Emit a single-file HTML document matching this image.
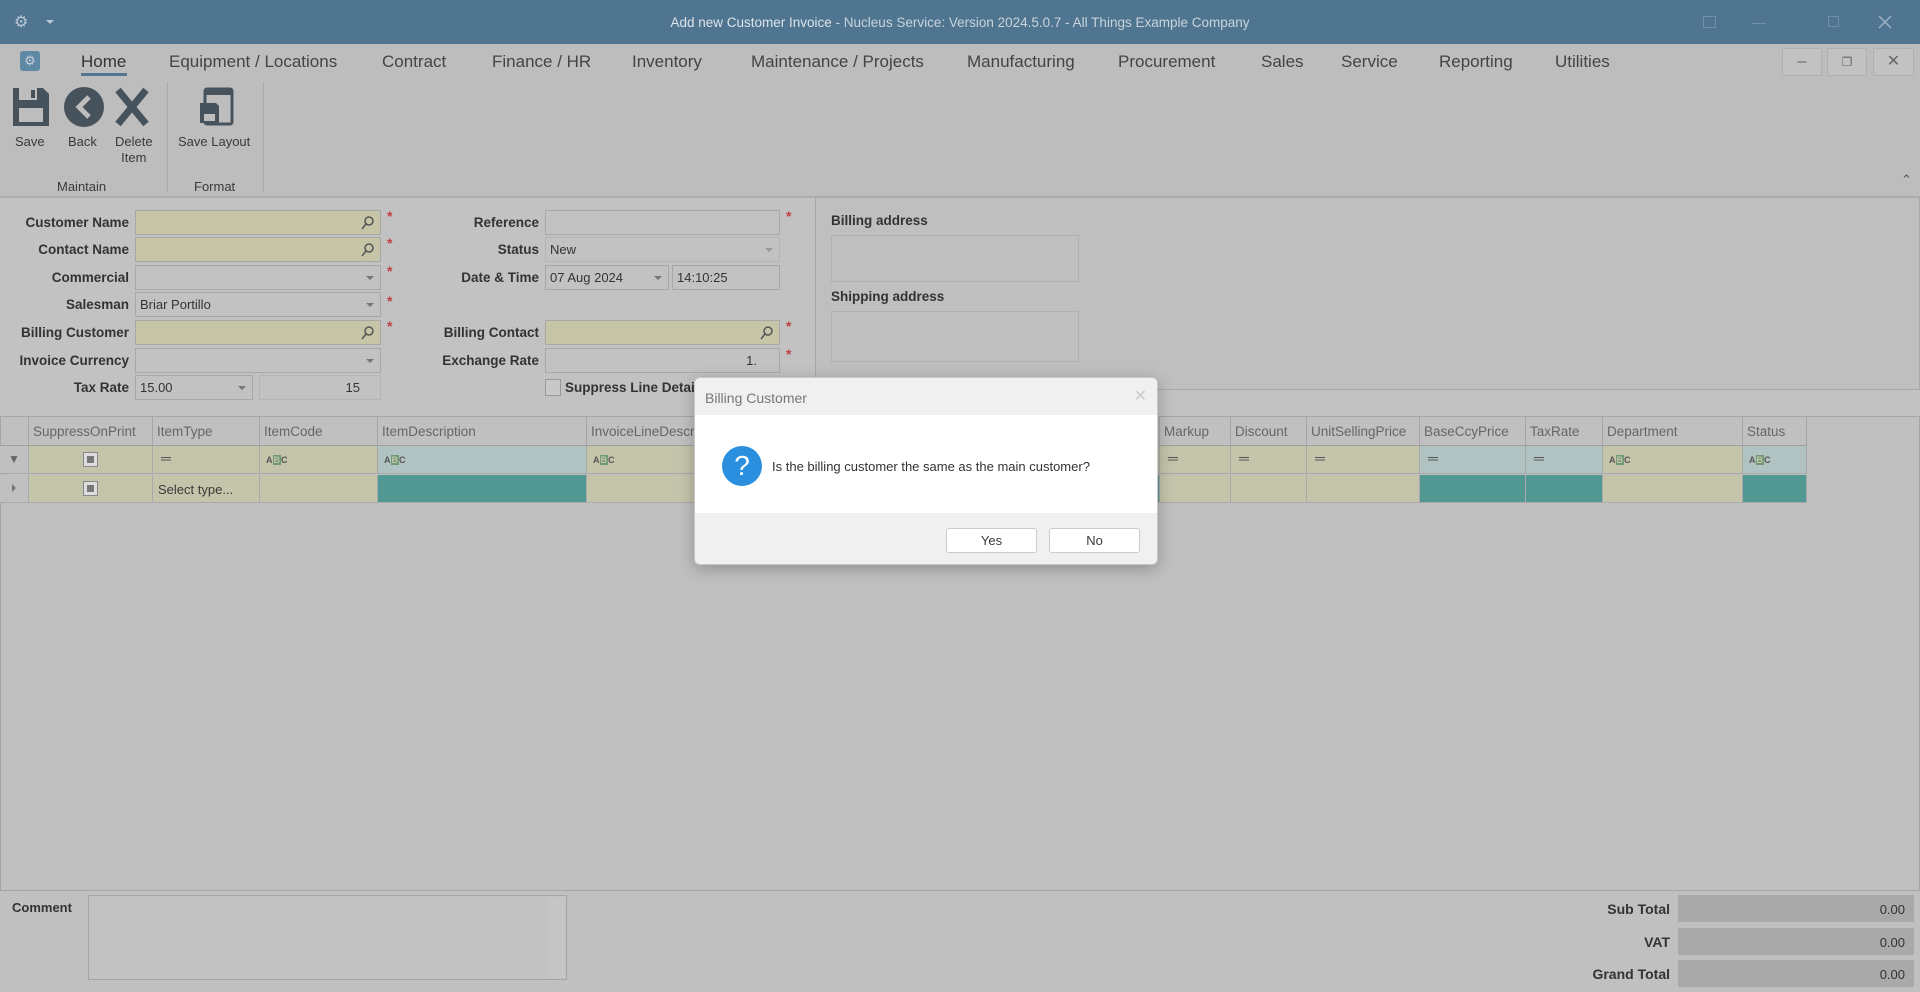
<!DOCTYPE html>
<html><head><meta charset="utf-8">
<style>
*{box-sizing:border-box;margin:0;padding:0}
body{width:1920px;height:992px;overflow:hidden;background:#c0c0c0;font-family:"Liberation Sans",sans-serif;color:#3a3a3a;position:relative}
.a{position:absolute}
.tab{position:absolute;top:52px;font-size:17px;color:#444}
.lbl{position:absolute;font-size:13.5px;font-weight:bold;text-align:right;color:#333}
.inp{position:absolute;height:25px;border:1px solid #a8a8a8;background:#c2c2c2;font-size:13px;padding:4px 4px;color:#333}
.y{background:#c6c5a8}
.ast{position:absolute;color:#c04040;font-size:14px;font-weight:bold}
.dd{position:absolute;right:6px;top:10px;width:0;height:0;border-left:4px solid transparent;border-right:4px solid transparent;border-top:4px solid #777}
.mag{position:absolute;right:5px;top:4px}
.hc{position:absolute;top:417px;height:29px;border-right:1px solid #a5a5a5;font-size:13.5px;color:#666;padding:7px 4px;white-space:nowrap;overflow:hidden}
.cell{position:absolute;height:28px;border-right:1px solid #a9a9a9;border-bottom:1px solid #a9a9a9}
.cy{background:#c4c4ab}.cb{background:#b1c2c2}.ct{background:#519893}
.abc{position:absolute;left:6px;top:9px;font-size:9px;font-weight:bold;color:#555}
.abc b{background:#6f9a74;color:#c4c4ab;padding:0 1px}
.eq{position:absolute;left:8px;top:4px;font-size:14px;color:#555}
.chk{position:absolute;width:15px;height:15px;border:1px solid #888;background:#ddd;top:6px}
.chk:after{content:"";position:absolute;left:3px;top:3px;width:7px;height:7px;background:#777}
</style></head><body>
<svg width="0" height="0" style="position:absolute"><defs><symbol id="m" viewBox="0 0 14 16"><circle cx="8" cy="6" r="4" fill="none" stroke="#555" stroke-width="1.5"/><path d="M5 9l-4 5" stroke="#555" stroke-width="1.5"/></symbol></defs></svg>
<!-- title bar -->
<div class="a" style="left:0;top:0;width:1920px;height:44px;background:#4f7590"></div>
<div class="a" style="left:14px;top:12px;color:#b8c8d4;font-size:16px">⚙</div>
<div class="a" style="left:46px;top:20px;border-left:4px solid transparent;border-right:4px solid transparent;border-top:4px solid #b8c8d4"></div>
<div class="a" style="left:0;width:1920px;top:15px;text-align:center;font-size:13.5px;color:#c9d4dc"><span style="color:#dde4ea">Add new Customer Invoice</span> - Nucleus Service: Version 2024.5.0.7 - All Things Example Company</div>
<div class="a" style="left:1703px;top:16px;width:13px;height:12px;border:1px solid #6f90a8"></div>
<div class="a" style="left:1752px;top:23px;width:14px;height:1px;background:#6f90a8"></div>
<div class="a" style="left:1828px;top:16px;width:11px;height:11px;border:1px solid #6f90a8"></div>
<svg class="a" style="left:1878px;top:15px" width="14" height="14"><path d="M1 1l12 12M13 1L1 13" stroke="#9fb5c6" stroke-width="1.5"/></svg>
<!-- tabs -->
<div class="a" style="left:0;top:44px;width:1920px;height:153px;background:#bdbdbd"></div>
<div class="a" style="left:20px;top:51px;width:20px;height:20px;background:#5e8aa6;border-radius:3px;color:#ccd;font-size:13px;text-align:center;line-height:20px">⚙</div>
<div class="tab" style="left:81px;color:#333">Home</div>
<div class="a" style="left:81px;top:73px;width:46px;height:3px;background:#4f7590"></div>
<div class="tab" style="left:169px">Equipment / Locations</div>
<div class="tab" style="left:382px">Contract</div>
<div class="tab" style="left:492px">Finance / HR</div>
<div class="tab" style="left:632px">Inventory</div>
<div class="tab" style="left:751px">Maintenance / Projects</div>
<div class="tab" style="left:967px">Manufacturing</div>
<div class="tab" style="left:1118px">Procurement</div>
<div class="tab" style="left:1261px">Sales</div>
<div class="tab" style="left:1341px">Service</div>
<div class="tab" style="left:1439px">Reporting</div>
<div class="tab" style="left:1555px">Utilities</div>
<div class="a" style="left:1782px;top:48px;width:40px;height:28px;border:1px solid #b0b0b0;background:#c2c2c2;text-align:center;line-height:26px;color:#666">–</div>
<div class="a" style="left:1827px;top:48px;width:40px;height:28px;border:1px solid #b0b0b0;background:#c2c2c2;text-align:center;line-height:26px;color:#666;font-size:12px">❐</div>
<div class="a" style="left:1873px;top:48px;width:41px;height:28px;border:1px solid #b0b0b0;background:#c2c2c2;text-align:center;line-height:26px;color:#666">✕</div>
<!-- ribbon -->
<svg class="a" style="left:10px;top:86px" width="145" height="42">
 <g fill="#46525c">
  <path d="M3 2h30l6 6v32H3z"/><rect x="9" y="2" width="18" height="12" fill="#bdbdbd"/><rect x="21" y="4" width="4" height="8"/><rect x="9" y="22" width="24" height="14" fill="#bdbdbd"/>
  <ellipse cx="74" cy="21" rx="20" ry="20"/><path d="M79 11l-10 10 10 10" stroke="#bdbdbd" stroke-width="5" fill="none"/>
  <path d="M108 4l28 34M136 4l-28 34" stroke="#46525c" stroke-width="7"/>
 </g></svg>
<svg class="a" style="left:198px;top:87px" width="40" height="40"><g fill="none" stroke="#46525c" stroke-width="3"><rect x="7" y="2" width="27" height="35" rx="2"/></g><rect x="7" y="2" width="27" height="6" fill="#46525c"/><path d="M2 16h16l3 3v17H2z" fill="#46525c"/><rect x="6" y="27" width="11" height="7" fill="#bdbdbd"/></svg>
<div class="a" style="left:15px;top:134px;font-size:13px">Save</div>
<div class="a" style="left:68px;top:134px;font-size:13px">Back</div>
<div class="a" style="left:115px;top:134px;font-size:13px;text-align:center;line-height:16px">Delete<br>Item</div>
<div class="a" style="left:178px;top:134px;font-size:13px">Save Layout</div>
<div class="a" style="left:57px;top:179px;font-size:13px">Maintain</div>
<div class="a" style="left:194px;top:179px;font-size:13px">Format</div>
<div class="a" style="left:167px;top:82px;width:1px;height:110px;background:#aaa"></div>
<div class="a" style="left:263px;top:82px;width:1px;height:110px;background:#aaa"></div>
<div class="a" style="left:1901px;top:172px;font-size:13px;color:#555">⌃</div>
<div class="a" style="left:0;top:196px;width:1920px;height:2px;background:#adadad"></div>
<!-- form left -->
<div class="a" style="left:0;top:198px;width:1920px;height:219px;background:#c2c2c2"></div>
<div class="lbl" style="left:0;width:129px;top:215px">Customer Name</div>
<div class="inp y" style="left:135px;top:210px;width:246px"><svg class="mag" width="14" height="16"><use href="#m"/></svg></div><div class="ast" style="left:387px;top:208px">*</div>
<div class="lbl" style="left:0;width:129px;top:242px">Contact Name</div>
<div class="inp y" style="left:135px;top:237px;width:246px"><svg class="mag" width="14" height="16"><use href="#m"/></svg></div><div class="ast" style="left:387px;top:235px">*</div>
<div class="lbl" style="left:0;width:129px;top:270px">Commercial</div>
<div class="inp" style="left:135px;top:265px;width:246px"><span class="dd"></span></div><div class="ast" style="left:387px;top:263px">*</div>
<div class="lbl" style="left:0;width:129px;top:297px">Salesman</div>
<div class="inp" style="left:135px;top:292px;width:246px">Briar Portillo<span class="dd"></span></div><div class="ast" style="left:387px;top:293px">*</div>
<div class="lbl" style="left:0;width:129px;top:325px">Billing Customer</div>
<div class="inp y" style="left:135px;top:320px;width:246px"><svg class="mag" width="14" height="16"><use href="#m"/></svg></div><div class="ast" style="left:387px;top:318px">*</div>
<div class="lbl" style="left:0;width:129px;top:353px">Invoice Currency</div>
<div class="inp" style="left:135px;top:348px;width:246px"><span class="dd"></span></div>
<div class="lbl" style="left:0;width:129px;top:380px">Tax Rate</div>
<div class="inp" style="left:135px;top:375px;width:118px">15.00<span class="dd"></span></div>
<div class="inp" style="left:259px;top:375px;width:122px;text-align:right;padding-right:20px;border-color:#b5b5b5">15</div>
<!-- form mid -->
<div class="lbl" style="left:400px;width:139px;top:215px">Reference</div>
<div class="inp" style="left:545px;top:210px;width:235px"></div><div class="ast" style="left:786px;top:208px">*</div>
<div class="lbl" style="left:400px;width:139px;top:242px">Status</div>
<div class="inp" style="left:545px;top:237px;width:235px;border-color:#b5b5b5">New<span class="dd" style="border-top-color:#999"></span></div>
<div class="lbl" style="left:400px;width:139px;top:270px">Date &amp; Time</div>
<div class="inp" style="left:545px;top:265px;width:124px">07 Aug 2024<span class="dd"></span></div>
<div class="inp" style="left:672px;top:265px;width:108px">14:10:25</div>
<div class="lbl" style="left:400px;width:139px;top:325px">Billing Contact</div>
<div class="inp y" style="left:545px;top:320px;width:235px"><svg class="mag" width="14" height="16"><use href="#m"/></svg></div><div class="ast" style="left:786px;top:318px">*</div>
<div class="lbl" style="left:400px;width:139px;top:353px">Exchange Rate</div>
<div class="inp" style="left:545px;top:348px;width:235px;text-align:right;padding-right:22px">1.</div><div class="ast" style="left:786px;top:346px">*</div>
<div class="a" style="left:545px;top:379px;width:16px;height:17px;border:1px solid #999;background:#c8c8c8"></div>
<div class="lbl" style="left:565px;top:380px;text-align:left">Suppress Line Details</div>
<!-- right panel -->
<div class="a" style="left:815px;top:197px;width:1105px;height:193px;border:1px solid #a8a8a8;background:#bfbfbf"></div>
<div class="lbl" style="left:831px;top:213px;text-align:left">Billing address</div>
<div class="a" style="left:831px;top:235px;width:248px;height:47px;border:1px solid #b0b0b0"></div>
<div class="lbl" style="left:831px;top:289px;text-align:left">Shipping address</div>
<div class="a" style="left:831px;top:311px;width:248px;height:51px;border:1px solid #b0b0b0"></div>
<!-- grid -->
<div class="a" style="left:0;top:416px;width:1920px;height:475px;border:1px solid #a5a5a5;background:#c0c0c0"></div>
<div class="a" style="left:0;top:445px;width:1807px;height:1px;background:#9f9f9f"></div>
<div class="hc" style="left:0;width:29px"></div>
<div class="hc" style="left:29px;width:124px">SuppressOnPrint</div>
<div class="hc" style="left:153px;width:107px">ItemType</div>
<div class="hc" style="left:260px;width:118px">ItemCode</div>
<div class="hc" style="left:378px;width:209px">ItemDescription</div>
<div class="hc" style="left:587px;width:573px">InvoiceLineDescription</div>
<div class="hc" style="left:1160px;width:71px">Markup</div>
<div class="hc" style="left:1231px;width:76px">Discount</div>
<div class="hc" style="left:1307px;width:113px">UnitSellingPrice</div>
<div class="hc" style="left:1420px;width:106px">BaseCcyPrice</div>
<div class="hc" style="left:1526px;width:77px">TaxRate</div>
<div class="hc" style="left:1603px;width:140px">Department</div>
<div class="hc" style="left:1743px;width:64px">Status</div>
<!-- filter row -->
<div class="cell" style="left:0;top:446px;width:29px;background:#c0c0c0"><span class="a" style="left:8px;top:6px;font-size:12px;color:#666">▼</span></div>
<div class="cell cy" style="left:29px;top:446px;width:124px"><span class="chk" style="left:54px"></span></div>
<div class="cell cy" style="left:153px;top:446px;width:107px"><span class="eq">═</span></div>
<div class="cell cy" style="left:260px;top:446px;width:118px"><span class="abc">A<b>B</b>C</span></div>
<div class="cell cb" style="left:378px;top:446px;width:209px"><span class="abc">A<b>B</b>C</span></div>
<div class="cell cy" style="left:587px;top:446px;width:573px"><span class="abc">A<b>B</b>C</span></div>
<div class="cell cy" style="left:1160px;top:446px;width:71px"><span class="eq">═</span></div>
<div class="cell cy" style="left:1231px;top:446px;width:76px"><span class="eq">═</span></div>
<div class="cell cy" style="left:1307px;top:446px;width:113px"><span class="eq">═</span></div>
<div class="cell cb" style="left:1420px;top:446px;width:106px"><span class="eq">═</span></div>
<div class="cell cb" style="left:1526px;top:446px;width:77px"><span class="eq">═</span></div>
<div class="cell cy" style="left:1603px;top:446px;width:140px"><span class="abc">A<b>B</b>C</span></div>
<div class="cell cb" style="left:1743px;top:446px;width:64px"><span class="abc">A<b>B</b>C</span></div>
<!-- data row -->
<div class="cell" style="left:0;top:475px;width:29px;background:#c0c0c0"><span class="a" style="left:12px;top:9px;border-top:4px solid transparent;border-bottom:4px solid transparent;border-left:4px solid #777"></span></div>
<div class="cell cy" style="left:29px;top:475px;width:124px"><span class="chk" style="left:54px"></span></div>
<div class="cell cy" style="left:153px;top:475px;width:107px;font-size:13px;padding:7px 5px">Select type...</div>
<div class="cell cy" style="left:260px;top:475px;width:118px"></div>
<div class="cell ct" style="left:378px;top:475px;width:209px"></div>
<div class="cell cy" style="left:587px;top:475px;width:573px"></div>
<div class="cell ct" style="left:1150px;top:475px;width:10px"></div>
<div class="cell cy" style="left:1160px;top:475px;width:71px"></div>
<div class="cell cy" style="left:1231px;top:475px;width:76px"></div>
<div class="cell cy" style="left:1307px;top:475px;width:113px"></div>
<div class="cell ct" style="left:1420px;top:475px;width:106px"></div>
<div class="cell ct" style="left:1526px;top:475px;width:77px"></div>
<div class="cell cy" style="left:1603px;top:475px;width:140px"></div>
<div class="cell ct" style="left:1743px;top:475px;width:64px"></div>
<!-- bottom -->
<div class="lbl" style="left:12px;top:900px;text-align:left;font-size:13px">Comment</div>
<div class="a" style="left:88px;top:895px;width:479px;height:85px;border:1px solid #a5a5a5;background:#c2c2c2"></div>
<div class="a" style="left:548px;top:897px;width:17px;height:81px;background:#c6c6c6"></div>
<div class="lbl" style="left:1500px;width:170px;top:901px;font-size:14px">Sub Total</div>
<div class="lbl" style="left:1500px;width:170px;top:934px;font-size:14px">VAT</div>
<div class="lbl" style="left:1500px;width:170px;top:966px;font-size:14px">Grand Total</div>
<div class="inp" style="left:1678px;top:895px;width:236px;height:27px;background:#a9a9a9;text-align:right;padding:6px 8px">0.00</div>
<div class="inp" style="left:1678px;top:928px;width:236px;height:27px;background:#a9a9a9;text-align:right;padding:6px 8px">0.00</div>
<div class="inp" style="left:1678px;top:960px;width:236px;height:27px;background:#a9a9a9;text-align:right;padding:6px 8px">0.00</div>
<!-- dialog -->
<div class="a" style="left:694px;top:377px;width:464px;height:188px;border-radius:6px;overflow:hidden;box-shadow:0 4px 16px rgba(0,0,0,.25);background:#f0f0f0;border:1px solid #c8c8c8">
 <div class="a" style="left:10px;top:12px;font-size:14px;color:#777">Billing Customer</div>
 <div class="a" style="right:10px;top:8px;font-size:16px;color:#ccc">✕</div>
 <div class="a" style="left:0;top:37px;width:464px;height:98px;background:#fff"></div>
 <div class="a" style="left:27px;top:68px;width:40px;height:40px;border-radius:50%;background:#2b8fe0;color:#fff;font-size:28px;text-align:center;line-height:40px">?</div>
 <div class="a" style="left:77px;top:81px;font-size:13px;color:#333">Is the billing customer the same as the main customer?</div>
 <div class="a" style="left:251px;top:150px;width:91px;height:25px;background:#fff;border:1px solid #ccc;border-radius:3px;text-align:center;line-height:23px;font-size:13px">Yes</div>
 <div class="a" style="left:354px;top:150px;width:91px;height:25px;background:#fff;border:1px solid #ccc;border-radius:3px;text-align:center;line-height:23px;font-size:13px">No</div>
</div>
</body></html>
